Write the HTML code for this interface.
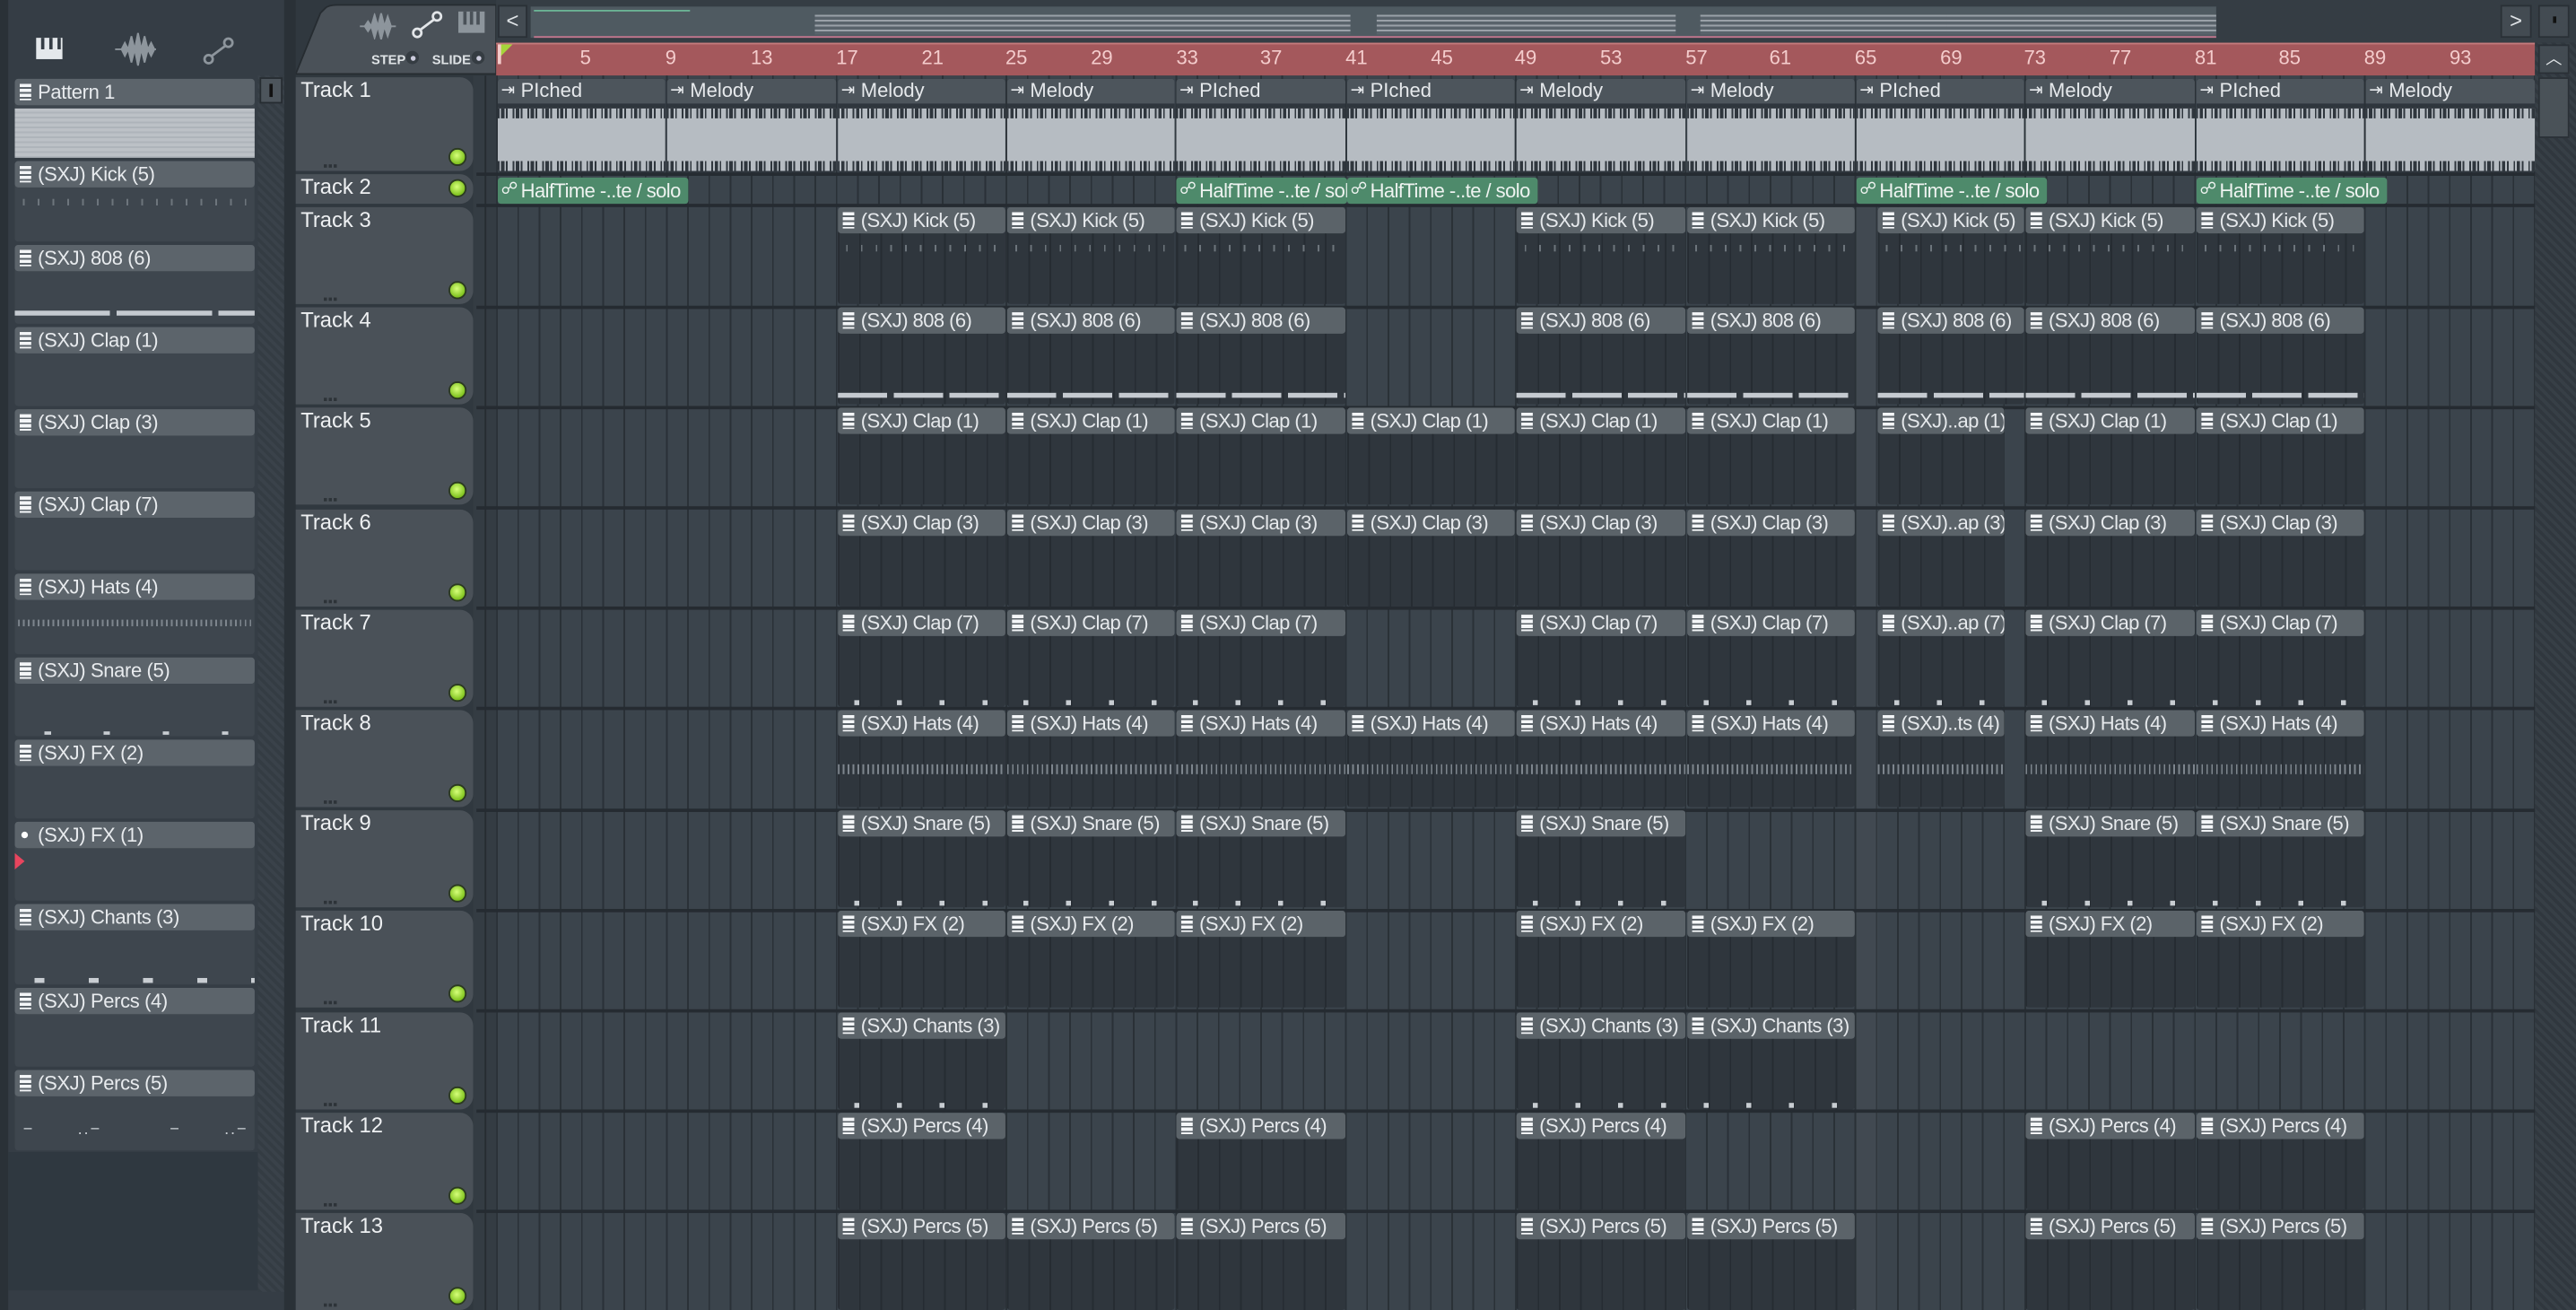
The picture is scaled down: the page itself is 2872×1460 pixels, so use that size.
<!DOCTYPE html>
<html><head><meta charset="utf-8"><style>
html,body{margin:0;padding:0;width:2872px;height:1460px;overflow:hidden;background:#2b3238}
#s{position:absolute;left:0;top:0;width:1568px;height:797px;transform:scale(1.83163,1.83187);transform-origin:0 0;font-family:"Liberation Sans Narrow","Liberation Sans",sans-serif;color:#e3e6e9;overflow:hidden;background:#30383f}
.a{position:absolute}
#lp{left:5px;top:0;width:168px;height:797px;background:#353d45}
.pi{position:absolute;left:9px;width:146px;background:#3e464e;border-radius:2px}
.pi b{display:block;height:16px;background:#5c646b;border-radius:2px;font-weight:normal;font-size:12px;letter-spacing:-0.2px;line-height:16px;padding-left:14px;white-space:nowrap;position:relative;color:#e8ebee}
.ic::before{content:"";position:absolute;left:3px;top:3px;width:7px;height:10px;background:repeating-linear-gradient(#f4f6f8 0 2px,transparent 2px 3px)}
#grid{left:302px;top:46px;width:1241px;height:751px;background-color:#3b444c;background-image:repeating-linear-gradient(90deg,#2a3137 0 1px,transparent 1px 12.92px)}
.row{position:absolute;left:290px;width:1253px;height:2px;background:#252b31}
.th{position:absolute;left:180px;width:108px;background:#4a5158;border-radius:0 8px 8px 0;font-size:13px;line-height:16px;padding-left:3px;box-sizing:border-box;color:#eef0f2}
.th i{position:absolute;right:4px;bottom:3px;width:9px;height:9px;border-radius:50%;background:radial-gradient(circle at 45% 40%,#d6ff7a,#7fc21e 70%);border:1px solid #2b3a20}
.th u{position:absolute;left:17px;bottom:2px;width:9px;height:2px;background:repeating-linear-gradient(90deg,#2d3338 0 2px,transparent 2px 3px)}
.c{position:absolute;height:59px;background-color:#2f363d;background-image:repeating-linear-gradient(90deg,#262c32 0 1px,transparent 1px 12.92px);border-radius:2px;overflow:hidden}
.c b{display:block;height:16px;background:#5b6369;border-radius:2px;font-weight:normal;font-size:12px;letter-spacing:-0.3px;line-height:16px;padding-left:14px;white-space:nowrap;overflow:hidden;position:relative;color:#e6e9ec}
.c b::before{content:"";position:absolute;left:3px;top:3px;width:7px;height:10px;background:repeating-linear-gradient(#f4f6f8 0 2px,transparent 2px 3px)}
.A{left:510px;width:102px}.B{left:613px;width:102px}.C{left:716px;width:103px}.D{left:820px;width:102px}.E{left:923px;width:103px}.F{left:1027px;width:102px}.G{left:1143px;width:89px}.G2{left:1143px;width:77px}.H{left:1233px;width:103px}.I{left:1337px;width:102px}
.r3{top:126px}.r4{top:187.2px}.r5{top:248.4px}.r6{top:309.6px}.r7{top:370.8px}.r8{top:432px}.r9{top:493.2px}.r10{top:554.4px}.r11{top:615.6px}.r12{top:676.8px}.r13{top:738px}
.k8::after{content:"";position:absolute;left:0;right:0;bottom:4px;height:3px;background:repeating-linear-gradient(90deg,#c5cad0 0 30px,transparent 30px 34px)}
.hat::after{content:"";position:absolute;left:0;right:0;top:33px;height:6px;background:repeating-linear-gradient(90deg,#7d858d 0 1px,transparent 1px 3px)}
.kk::after{content:"";position:absolute;left:0;right:0;top:23px;height:4px;background:repeating-linear-gradient(90deg,transparent 0 5px,#6d757c 5px 6px,transparent 6px 9px)}
.dt::after{content:"";position:absolute;left:0;right:0;bottom:1px;height:3px;background:repeating-linear-gradient(90deg,transparent 0 10px,#c8cdd2 10px 13px,transparent 13px 26px)}
.w{position:absolute;top:48px;height:57px;background:#2f363d;border-radius:2px;overflow:hidden}
.w b{display:block;height:15px;background:#4d555c;font-weight:normal;font-size:12px;line-height:15px;padding-left:14px;white-space:nowrap;position:relative;color:#e6e9ec}
.w b::before{content:"⇥";position:absolute;left:2px;top:0;font-size:10px}
.w i{position:absolute;left:0;right:0;top:18px;height:38px;background:#b6bcc2}
.w i::before,.w i::after{content:"";position:absolute;left:0;right:0;height:6px;background:repeating-linear-gradient(90deg,#2f363d 0 1px,transparent 1px 2px,#2f363d 2px 4px,transparent 4px 5px,#2f363d 5px 6px,transparent 6px 9px)}
.w i::before{top:0}.w i::after{bottom:0}
.g{position:absolute;top:108px;height:16px;background:#4e8a6b;border-radius:2px;font-size:12px;letter-spacing:-0.3px;line-height:16px;padding-left:14px;box-sizing:border-box;white-space:nowrap;overflow:hidden;color:#eef3f0}
.g::before{content:"☍";position:absolute;left:2px;top:0;font-size:10px}
.num{position:absolute;top:28px;font-size:12px;color:#f4cccc}
</style></head><body><div id="s">
<div class="a" style="left:0;top:0;width:5px;height:797px;background:#2a3137"></div>
<div id="lp" class="a"></div>
<div class="a" style="left:22px;top:23px;width:16px;height:13px;background:#e4e8eb"></div>
<div class="a" style="left:25px;top:23px;width:2px;height:7px;background:#353d45"></div>
<div class="a" style="left:30px;top:23px;width:2px;height:7px;background:#353d45"></div>
<div class="a" style="left:35px;top:23px;width:2px;height:7px;background:#353d45"></div>
<svg class="a" style="left:70px;top:20px" width="25" height="20"><path d="M0 10h4l2-4 2 4 2-8 2 8 2-10 2 10 2-8 2 8 2-4 2 4h3 M0 10h4l2 4 2-4 2 8 2-8 2 10 2-10 2 8 2-8 2 4 2-4" fill="#8d959c" stroke="#8d959c"/></svg>
<svg class="a" style="left:123px;top:22px" width="20" height="18"><circle cx="4" cy="14" r="2.5" fill="none" stroke="#8d959c" stroke-width="1.5"/><circle cx="16" cy="4" r="2.5" fill="none" stroke="#8d959c" stroke-width="1.5"/><path d="M6 12L14 6" stroke="#8d959c" stroke-width="1.5"/></svg>
<div class="pi" style="top:48px;height:48px"><b class="ic">Pattern 1</b><div style="margin:2px 0 0;height:30px;background:repeating-linear-gradient(#bcc1c6 0 2px,#aeb4ba 2px 3px)"></div></div>
<div class="pi kk" style="top:98px;height:49px"><b class="ic">(SXJ) Kick (5)</b></div>
<div class="pi" style="top:149px;height:48px"><b class="ic">(SXJ) 808 (6)</b><div class="a" style="left:0;right:0;top:40px;height:3px;background:repeating-linear-gradient(90deg,#c5cad0 0 58px,transparent 58px 62px)"></div></div>
<div class="pi" style="top:199px;height:48px"><b class="ic">(SXJ) Clap (1)</b></div>
<div class="pi" style="top:249px;height:48px"><b class="ic">(SXJ) Clap (3)</b></div>
<div class="pi" style="top:299px;height:48px"><b class="ic">(SXJ) Clap (7)</b></div>
<div class="pi" style="top:349px;height:49px"><b class="ic">(SXJ) Hats (4)</b><div class="a" style="left:2px;right:2px;top:28px;height:4px;background:repeating-linear-gradient(90deg,#7d858d 0 1px,transparent 1px 3px)"></div></div>
<div class="pi" style="top:400px;height:48px"><b class="ic">(SXJ) Snare (5)</b><div class="a" style="left:0;right:0;top:45px;height:2px;background:repeating-linear-gradient(90deg,transparent 0 18px,#c8cdd2 18px 22px,transparent 22px 36px)"></div></div>
<div class="pi" style="top:450px;height:48px"><b class="ic">(SXJ) FX (2)</b></div>
<div class="pi" style="top:500px;height:48px"><b>(SXJ) FX (1)</b><div class="a" style="left:4px;top:6px;width:4px;height:4px;border-radius:50%;background:#fff"></div><div class="a" style="left:0;top:19px;width:0;height:0;border-left:6px solid #e8455e;border-top:5px solid transparent;border-bottom:5px solid transparent"></div></div>
<div class="pi" style="top:550px;height:49px"><b class="ic">(SXJ) Chants (3)</b><div class="a" style="left:0;right:0;top:45px;height:3px;background:repeating-linear-gradient(90deg,transparent 0 12px,#c8cdd2 12px 18px,transparent 18px 33px)"></div></div>
<div class="pi" style="top:601px;height:48px"><b class="ic">(SXJ) Percs (4)</b></div>
<div class="pi" style="top:651px;height:49px"><b class="ic">(SXJ) Percs (5)</b><div class="a" style="left:5px;top:31px;font-size:10px;color:#c8cdd2;letter-spacing:1px">−&nbsp;&nbsp;&nbsp;&nbsp;&nbsp;&nbsp;&nbsp;..−&nbsp;&nbsp;&nbsp;&nbsp;&nbsp;&nbsp;&nbsp;&nbsp;&nbsp;&nbsp;&nbsp;−&nbsp;&nbsp;&nbsp;&nbsp;&nbsp;&nbsp;&nbsp;..−</div></div>
<div class="a" style="left:5px;top:701px;width:168px;height:84px;background:#2f3840"></div>
<div class="a" style="left:157px;top:46px;width:16px;height:740px;background:repeating-linear-gradient(45deg,#343c43 0 2px,#3a424a 2px 4px)"></div>
<div class="a" style="left:158px;top:47px;width:14px;height:16px;background:#4d555c;border:1px solid #262c31;box-sizing:border-box"></div>
<div class="a" style="left:164px;top:51px;width:2px;height:8px;background:#111"></div>
<div class="a" style="left:173px;top:0;width:7px;height:797px;background:#2a3137"></div>
<svg class="a" style="left:180px;top:0" width="125" height="47"><path d="M18 5 Q20 3 25 3 H122 V45 H0 L15 8Z" fill="#4a5158" stroke="#262c31"/></svg>
<svg class="a" style="left:219px;top:8px" width="22" height="16"><path d="M0 8h3l2-3 2 3 2-7 2 7 2-8 2 8 2-6 2 6h3 M0 8h3l2 3 2-3 2 7 2-7 2 8 2-8 2 6 2-6" fill="#8d959c" stroke="#8d959c"/></svg>
<svg class="a" style="left:250px;top:6px" width="20" height="18"><circle cx="4" cy="14" r="2.5" fill="none" stroke="#e3e6e9" stroke-width="1.5"/><circle cx="16" cy="4" r="2.5" fill="none" stroke="#e3e6e9" stroke-width="1.5"/><path d="M6 12L14 6" stroke="#e3e6e9" stroke-width="1.5"/></svg>
<div class="a" style="left:279px;top:7px;width:16px;height:13px;background:#8d959c"></div>
<div class="a" style="left:282px;top:7px;width:2px;height:8px;background:#4a5158"></div>
<div class="a" style="left:286px;top:7px;width:2px;height:8px;background:#4a5158"></div>
<div class="a" style="left:290px;top:7px;width:2px;height:8px;background:#4a5158"></div>
<div class="a" style="left:226px;top:32px;font-size:8px;color:#dfe3e6;font-family:'Liberation Sans',sans-serif;font-weight:bold">STEP</div>
<div class="a" style="left:247px;top:31px;width:8px;height:8px;border-radius:50%;background:#353c42"><div class="a" style="left:2.5px;top:2.5px;width:3px;height:3px;border-radius:50%;background:#ccd"></div></div>
<div class="a" style="left:263px;top:32px;font-size:8px;color:#dfe3e6;font-family:'Liberation Sans',sans-serif;font-weight:bold">SLIDE</div>
<div class="a" style="left:287px;top:31px;width:8px;height:8px;border-radius:50%;background:#353c42"><div class="a" style="left:2.5px;top:2.5px;width:3px;height:3px;border-radius:50%;background:#ccd"></div></div>
<div class="a" style="left:288px;top:46px;width:14px;height:751px;background:#343c43"></div>
<div class="a" style="left:295px;top:46px;width:1px;height:751px;background:#262c31"></div>
<div class="a" style="left:302px;top:0;width:1266px;height:26px;background:#353d44"></div>
<div class="a" style="left:303px;top:3px;width:18px;height:20px;background:#434b52;border:1px solid #2a3036;box-sizing:border-box;font-size:13px;line-height:18px;text-align:center;color:#dfe3e6">&lt;</div>
<div class="a" style="left:323px;top:4px;width:1026px;height:19px;background:#4f5a61"></div>
<div class="a" style="left:325px;top:6px;width:95px;height:1px;background:#6bb596"></div>
<div class="a" style="left:325px;top:22px;width:1024px;height:1px;background:#c5778f"></div>
<div class="a" style="left:496px;top:9px;width:326px;height:12px;background:repeating-linear-gradient(#9aa1a8 0 1px,#59636b 1px 3px)"></div>
<div class="a" style="left:838px;top:9px;width:182px;height:12px;background:repeating-linear-gradient(#9aa1a8 0 1px,#59636b 1px 3px)"></div>
<div class="a" style="left:1035px;top:9px;width:150px;height:12px;background:repeating-linear-gradient(#9aa1a8 0 1px,#59636b 1px 3px)"></div>
<div class="a" style="left:1185px;top:9px;width:164px;height:12px;background:repeating-linear-gradient(#9aa1a8 0 1px,#59636b 1px 3px)"></div>
<div class="a" style="left:1522px;top:3px;width:19px;height:20px;background:#434b52;border:1px solid #2a3036;box-sizing:border-box;font-size:13px;line-height:18px;text-align:center;color:#dfe3e6">&gt;</div>
<div class="a" style="left:1545px;top:3px;width:19px;height:20px;background:#434b52;border:1px solid #2a3036;box-sizing:border-box"></div>
<div class="a" style="left:1554px;top:10px;width:2px;height:4px;background:#111"></div>
<div class="a" style="left:302px;top:26px;width:1241px;height:20px;background:#a4585c;border-top:1px solid #c27a7c;box-sizing:border-box"></div>
<div class="a" style="left:303px;top:27px;width:0;height:0;border-left:9px solid #a6d43a;border-bottom:9px solid transparent"></div>
<div class="a" style="left:303px;top:27px;width:2px;height:12px;background:#f4cccc"></div>
<div class="num" style="left:353px">5</div><div class="num" style="left:405px">9</div><div class="num" style="left:457px">13</div><div class="num" style="left:509px">17</div><div class="num" style="left:561px">21</div><div class="num" style="left:612px">25</div><div class="num" style="left:664px">29</div><div class="num" style="left:716px">33</div><div class="num" style="left:767px">37</div><div class="num" style="left:819px">41</div><div class="num" style="left:871px">45</div><div class="num" style="left:922px">49</div><div class="num" style="left:974px">53</div><div class="num" style="left:1026px">57</div><div class="num" style="left:1077px">61</div><div class="num" style="left:1129px">65</div><div class="num" style="left:1181px">69</div><div class="num" style="left:1232px">73</div><div class="num" style="left:1284px">77</div><div class="num" style="left:1336px">81</div><div class="num" style="left:1387px">85</div><div class="num" style="left:1439px">89</div><div class="num" style="left:1491px">93</div>
<div class="a" style="left:1543px;top:26px;width:25px;height:771px;background:repeating-linear-gradient(45deg,#30373e 0 2px,#373f46 2px 4px)"></div>
<div class="a" style="left:1545px;top:27px;width:19px;height:18px;background:#434b52;border:1px solid #2a3036;box-sizing:border-box;font-size:10px;line-height:17px;text-align:center;color:#dfe3e6">︿</div>
<div class="a" style="left:1545px;top:47px;width:19px;height:37px;background:#4a5258;border:1px solid #2a3036;box-sizing:border-box"></div>
<div id="grid" class="a"></div>
<div class="a" style="left:1130px;top:125px;width:13px;height:672px;background:rgba(255,255,255,.03)"></div>
<div class="row" style="top:105px"></div><div class="row" style="top:124px"></div><div class="row" style="top:185.5px"></div><div class="row" style="top:246.7px"></div><div class="row" style="top:307.9px"></div><div class="row" style="top:369.1px"></div><div class="row" style="top:430.3px"></div><div class="row" style="top:491.5px"></div><div class="row" style="top:552.7px"></div><div class="row" style="top:613.9px"></div><div class="row" style="top:675.1px"></div><div class="row" style="top:736.3px"></div>
<div class="th" style="top:47px;height:57px">Track 1<u></u><i></i></div>
<div class="th" style="top:106px;height:18px">Track 2<i style="bottom:4px"></i></div>
<div class="th" style="top:126px;height:59px">Track 3<u></u><i></i></div>
<div class="th" style="top:187.2px;height:59px">Track 4<u></u><i></i></div>
<div class="th" style="top:248.4px;height:59px">Track 5<u></u><i></i></div>
<div class="th" style="top:309.6px;height:59px">Track 6<u></u><i></i></div>
<div class="th" style="top:370.8px;height:59px">Track 7<u></u><i></i></div>
<div class="th" style="top:432px;height:59px">Track 8<u></u><i></i></div>
<div class="th" style="top:493.2px;height:59px">Track 9<u></u><i></i></div>
<div class="th" style="top:554.4px;height:59px">Track 10<u></u><i></i></div>
<div class="th" style="top:615.6px;height:59px">Track 11<u></u><i></i></div>
<div class="th" style="top:676.8px;height:59px">Track 12<u></u><i></i></div>
<div class="th" style="top:738px;height:59px">Track 13<u></u><i></i></div>
<div class="w" style="left:303px;width:102px"><b>PIched</b><i></i></div>
<div class="w" style="left:406px;width:103px"><b>Melody</b><i></i></div>
<div class="w" style="left:510px;width:102px"><b>Melody</b><i></i></div>
<div class="w" style="left:613px;width:102px"><b>Melody</b><i></i></div>
<div class="w" style="left:716px;width:103px"><b>PIched</b><i></i></div>
<div class="w" style="left:820px;width:102px"><b>PIched</b><i></i></div>
<div class="w" style="left:923px;width:103px"><b>Melody</b><i></i></div>
<div class="w" style="left:1027px;width:102px"><b>Melody</b><i></i></div>
<div class="w" style="left:1130px;width:102px"><b>PIched</b><i></i></div>
<div class="w" style="left:1233px;width:103px"><b>Melody</b><i></i></div>
<div class="w" style="left:1337px;width:102px"><b>PIched</b><i></i></div>
<div class="w" style="left:1440px;width:103px"><b>Melody</b><i></i></div>
<div class="g" style="left:303px;width:116px">HalfTime -..te / solo</div>
<div class="g" style="left:716px;width:104px">HalfTime -..te / solo</div>
<div class="g" style="left:820px;width:116px">HalfTime -..te / solo</div>
<div class="g" style="left:1130px;width:116px">HalfTime -..te / solo</div>
<div class="g" style="left:1337px;width:116px">HalfTime -..te / solo</div>
<div class="c r3 A kk"><b>(SXJ) Kick (5)</b></div><div class="c r3 B kk"><b>(SXJ) Kick (5)</b></div><div class="c r3 C kk"><b>(SXJ) Kick (5)</b></div><div class="c r3 E kk"><b>(SXJ) Kick (5)</b></div><div class="c r3 F kk"><b>(SXJ) Kick (5)</b></div><div class="c r3 G kk"><b>(SXJ) Kick (5)</b></div><div class="c r3 H kk"><b>(SXJ) Kick (5)</b></div><div class="c r3 I kk"><b>(SXJ) Kick (5)</b></div>
<div class="c r4 A k8"><b>(SXJ) 808 (6)</b></div><div class="c r4 B k8"><b>(SXJ) 808 (6)</b></div><div class="c r4 C k8"><b>(SXJ) 808 (6)</b></div><div class="c r4 E k8"><b>(SXJ) 808 (6)</b></div><div class="c r4 F k8"><b>(SXJ) 808 (6)</b></div><div class="c r4 G k8"><b>(SXJ) 808 (6)</b></div><div class="c r4 H k8"><b>(SXJ) 808 (6)</b></div><div class="c r4 I k8"><b>(SXJ) 808 (6)</b></div>
<div class="c r5 A"><b>(SXJ) Clap (1)</b></div><div class="c r5 B"><b>(SXJ) Clap (1)</b></div><div class="c r5 C"><b>(SXJ) Clap (1)</b></div><div class="c r5 D"><b>(SXJ) Clap (1)</b></div><div class="c r5 E"><b>(SXJ) Clap (1)</b></div><div class="c r5 F"><b>(SXJ) Clap (1)</b></div><div class="c r5 G2"><b>(SXJ)..ap (1)</b></div><div class="c r5 H"><b>(SXJ) Clap (1)</b></div><div class="c r5 I"><b>(SXJ) Clap (1)</b></div>
<div class="c r6 A"><b>(SXJ) Clap (3)</b></div><div class="c r6 B"><b>(SXJ) Clap (3)</b></div><div class="c r6 C"><b>(SXJ) Clap (3)</b></div><div class="c r6 D"><b>(SXJ) Clap (3)</b></div><div class="c r6 E"><b>(SXJ) Clap (3)</b></div><div class="c r6 F"><b>(SXJ) Clap (3)</b></div><div class="c r6 G2"><b>(SXJ)..ap (3)</b></div><div class="c r6 H"><b>(SXJ) Clap (3)</b></div><div class="c r6 I"><b>(SXJ) Clap (3)</b></div>
<div class="c r7 A dt"><b>(SXJ) Clap (7)</b></div><div class="c r7 B dt"><b>(SXJ) Clap (7)</b></div><div class="c r7 C dt"><b>(SXJ) Clap (7)</b></div><div class="c r7 E dt"><b>(SXJ) Clap (7)</b></div><div class="c r7 F dt"><b>(SXJ) Clap (7)</b></div><div class="c r7 G2 dt"><b>(SXJ)..ap (7)</b></div><div class="c r7 H dt"><b>(SXJ) Clap (7)</b></div><div class="c r7 I dt"><b>(SXJ) Clap (7)</b></div>
<div class="c r8 A hat"><b>(SXJ) Hats (4)</b></div><div class="c r8 B hat"><b>(SXJ) Hats (4)</b></div><div class="c r8 C hat"><b>(SXJ) Hats (4)</b></div><div class="c r8 D hat"><b>(SXJ) Hats (4)</b></div><div class="c r8 E hat"><b>(SXJ) Hats (4)</b></div><div class="c r8 F hat"><b>(SXJ) Hats (4)</b></div><div class="c r8 G2 hat"><b>(SXJ)..ts (4)</b></div><div class="c r8 H hat"><b>(SXJ) Hats (4)</b></div><div class="c r8 I hat"><b>(SXJ) Hats (4)</b></div>
<div class="c r9 A dt"><b>(SXJ) Snare (5)</b></div><div class="c r9 B dt"><b>(SXJ) Snare (5)</b></div><div class="c r9 C dt"><b>(SXJ) Snare (5)</b></div><div class="c r9 E dt"><b>(SXJ) Snare (5)</b></div><div class="c r9 H dt"><b>(SXJ) Snare (5)</b></div><div class="c r9 I dt"><b>(SXJ) Snare (5)</b></div>
<div class="c r10 A"><b>(SXJ) FX (2)</b></div><div class="c r10 B"><b>(SXJ) FX (2)</b></div><div class="c r10 C"><b>(SXJ) FX (2)</b></div><div class="c r10 E"><b>(SXJ) FX (2)</b></div><div class="c r10 F"><b>(SXJ) FX (2)</b></div><div class="c r10 H"><b>(SXJ) FX (2)</b></div><div class="c r10 I"><b>(SXJ) FX (2)</b></div>
<div class="c r11 A dt"><b>(SXJ) Chants (3)</b></div><div class="c r11 E dt"><b>(SXJ) Chants (3)</b></div><div class="c r11 F dt"><b>(SXJ) Chants (3)</b></div>
<div class="c r12 A"><b>(SXJ) Percs (4)</b></div><div class="c r12 C"><b>(SXJ) Percs (4)</b></div><div class="c r12 E"><b>(SXJ) Percs (4)</b></div><div class="c r12 H"><b>(SXJ) Percs (4)</b></div><div class="c r12 I"><b>(SXJ) Percs (4)</b></div>
<div class="c r13 A"><b>(SXJ) Percs (5)</b></div><div class="c r13 B"><b>(SXJ) Percs (5)</b></div><div class="c r13 C"><b>(SXJ) Percs (5)</b></div><div class="c r13 E"><b>(SXJ) Percs (5)</b></div><div class="c r13 F"><b>(SXJ) Percs (5)</b></div><div class="c r13 H"><b>(SXJ) Percs (5)</b></div><div class="c r13 I"><b>(SXJ) Percs (5)</b></div>
</div></body></html>
